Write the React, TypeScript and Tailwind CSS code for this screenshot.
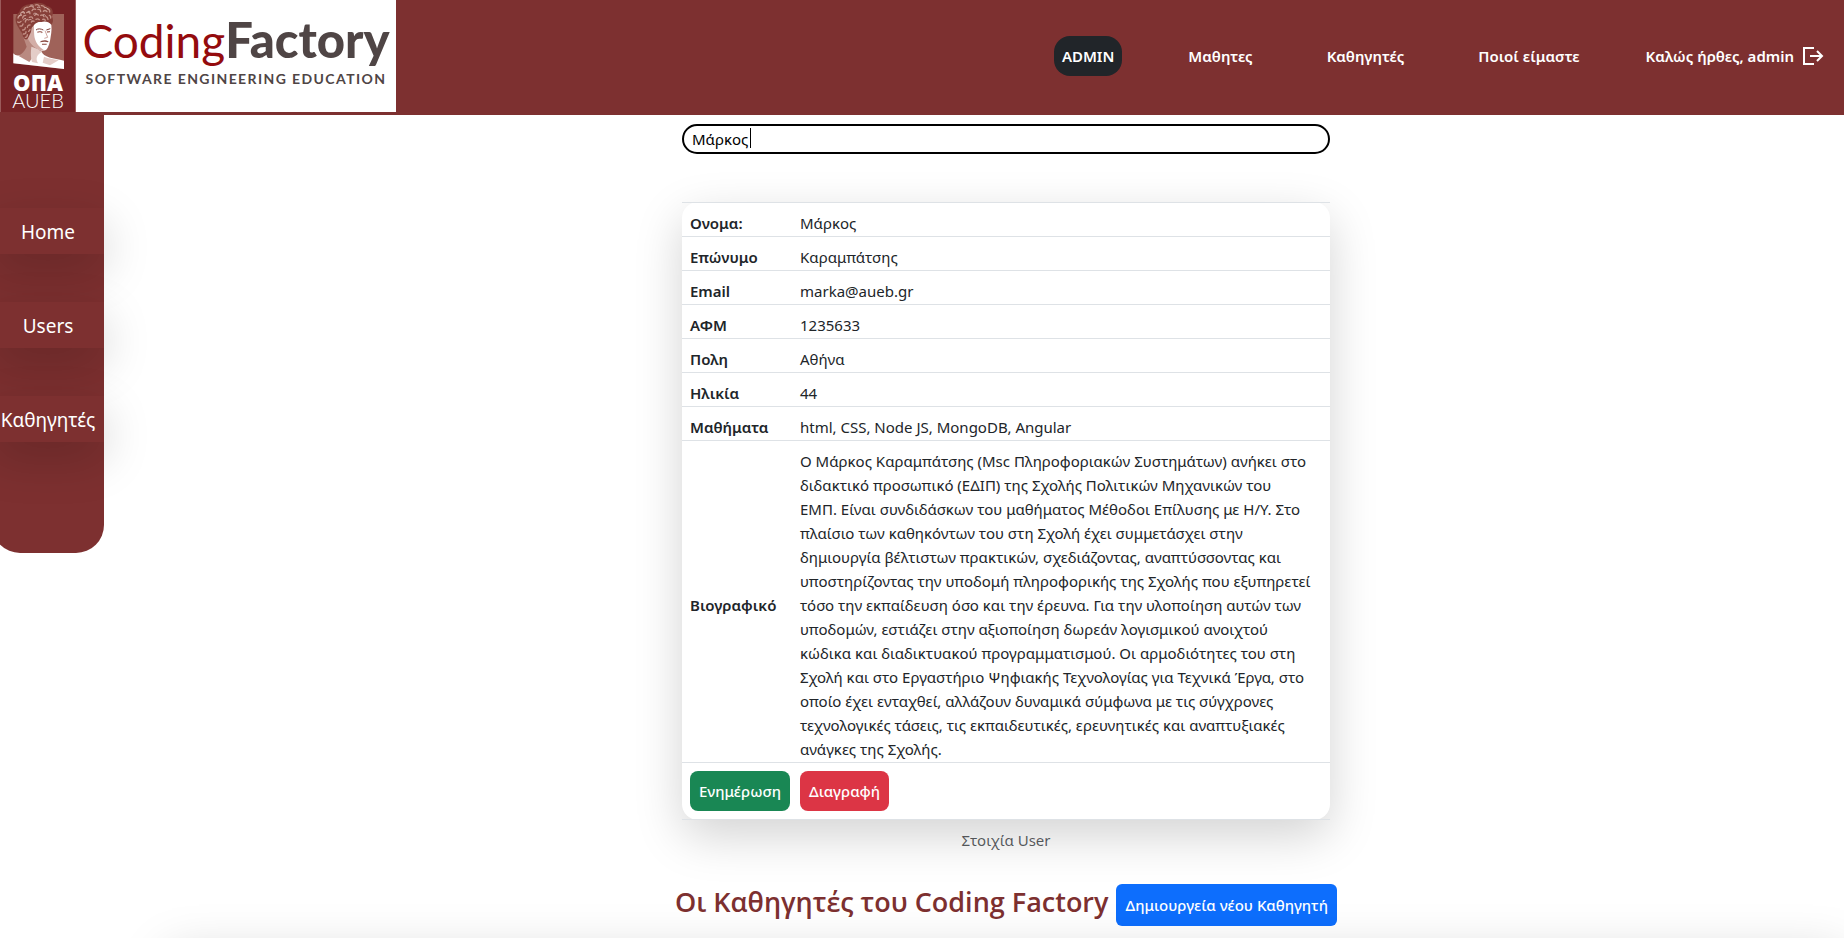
import { useState } from "react";

const navLinks = ["Μαθητες", "Καθηγητές", "Ποιοί είμαστε"];
const sideLinks = ["Home", "Users", "Καθηγητές"];

const details: [string, string][] = [
  ["Ονομα:", "Μάρκος"],
  ["Επώνυμο", "Καραμπάτσης"],
  ["Email", "marka@aueb.gr"],
  ["ΑΦΜ", "1235633"],
  ["Πολη", "Αθήνα"],
  ["Ηλικία", "44"],
  ["Μαθήματα", "html, CSS, Node JS, MongoDB, Angular"],
  [
    "Βιογραφικό",
    `Ο Μάρκος Καραμπάτσης (Msc Πληροφοριακών Συστημάτων) ανήκει στο
διδακτικό προσωπικό (ΕΔΙΠ) της Σχολής Πολιτικών Μηχανικών του
ΕΜΠ. Είναι συνδιδάσκων του μαθήματος Μέθοδοι Επίλυσης με Η/Υ. Στο
πλαίσιο των καθηκόντων του στη Σχολή έχει συμμετάσχει στην
δημιουργία βέλτιστων πρακτικών, σχεδιάζοντας, αναπτύσσοντας και
υποστηρίζοντας την υποδομή πληροφορικής της Σχολής που εξυπηρετεί
τόσο την εκπαίδευση όσο και την έρευνα. Για την υλοποίηση αυτών των
υποδομών, εστιάζει στην αξιοποίηση δωρεάν λογισμικού ανοιχτού
κώδικα και διαδικτυακού προγραμματισμού. Οι αρμοδιότητες του στη
Σχολή και στο Εργαστήριο Ψηφιακής Τεχνολογίας για Τεχνικά Έργα, στο
οποίο έχει ενταχθεί, αλλάζουν δυναμικά σύμφωνα με τις σύγχρονες
τεχνολογικές τάσεις, τις εκπαιδευτικές, ερευνητικές και αναπτυξιακές
ανάγκες της Σχολής.`,
  ],
];

function Bust() {
  return (
    <svg viewBox="0 0 228 210" className="h-[70px] w-[76px]" aria-hidden="true">
      <path d="M40 42H192V207L40 190Z" fill="#9f6259" />
      <path d="M40 160C52 174 70 164 84 146L124 154C130 172 160 176 192 182V207L40 190Z" fill="#fff" />
      <path d="M66 100L80 140C74 154 64 162 56 168L88 186C98 172 102 164 108 152L92 110Z" fill="#b98a81" />
      <path d="M94 140C92 160 92 172 96 186L114 190C106 176 110 164 126 156L112 146Z" fill="#e4cdc8" />
      <path d="M132 170C146 176 160 176 176 181L150 196L128 188Z" fill="#e4cdc8" />
      <path d="M80 62C96 52 132 54 152 66C156 80 155 96 152 110C150 126 146 142 138 150C130 154 120 152 112 146C98 136 82 116 78 96Z" fill="#fff" />
      <path d="M80 62L100 68C104 86 100 104 106 120C112 136 124 146 134 151C124 154 112 148 102 140C86 126 76 104 76 84Z" fill="#d3aea7" />
      <path d="M108 90C114 85 122 86 130 90M139 90L151 86" stroke="#7d3f3a" strokeWidth="3" fill="none" />
      <path d="M112 97C118 94 124 95 127 98M141 96L150 95" stroke="#a8746c" strokeWidth="4" fill="none" />
      <path d="M135 92L143 112L133 115" stroke="#cfa69f" strokeWidth="3" fill="none" />
      <path d="M119 127C124 119 138 119 146 124L144 127L134 125Z" fill="#8e4d45" />
      <path d="M126 133L140 133" stroke="#a8746c" strokeWidth="4" />
      <path d="M54 80C42 62 46 44 58 36C62 18 82 10 96 13C112 4 134 10 140 18C158 20 162 38 156 50C162 60 158 70 154 74C146 66 136 62 124 66C110 64 104 72 98 80C92 84 96 94 90 102C86 110 84 120 76 118C66 112 68 98 62 94Z" fill="#874039" />
      <g fill="none" stroke="#c39187" strokeWidth="4" strokeLinecap="round">
        <path d="M54 54q2-9 10-8M62 40q6-7 11 0M72 28q4-8 12-6M88 20q8-4 12 2M106 15q8-3 12 3M124 17q8-1 10 6M142 26q8 2 7 10" />
        <path d="M53 66q5 4 10-2M68 54q1-8 9-8M80 38q7-4 10 3M96 32q3-7 11-4M114 28q8-1 8 7M130 34q5-5 11 1M148 46q5 1 4 8" />
        <path d="M60 78q7 2 9-6M76 66q0-8 8-8M88 52q7-4 10 3M104 46q4-6 11-1M122 46q7-3 10 4M138 50q5 1 6 8M108 58q6-3 10 1M94 66q4-5 8-2M128 58q6-1 8 3" />
        <path d="M68 90q7 1 8-7M82 82q1-8 8-7M70 102q8 1 8-7M76 112q6-1 6-8M86 94q4-2 4-6" />
      </g>
      <g fill="none" stroke="#e6cfc8" strokeWidth="2" strokeLinecap="round">
        <path d="M66 36q5-4 8 1M92 15q6-2 9 3M112 22q5-3 9 1M136 22q5 0 7 5M57 48q2-5 7-5M84 34q5-3 7 2M100 42q4-5 9-2M70 60q2-6 7-5M130 44q4-2 7 3M86 60q4-4 8-1" />
      </g>
    </svg>
  );
}

function Logo() {
  return (
    <a href="#home" className="flex h-28 shrink-0 bg-white">
      <span className="flex w-[76px] flex-col items-center border-x border-[#9a5a5a] bg-[#752225] text-white">
        <Bust />
        <span className="mt-0.5 font-['Open_Sans',sans-serif] text-[22px] leading-5 font-extrabold">ΟΠΑ</span>
        <span className="font-[Lato,sans-serif] text-[20px] leading-4 font-light">AUEB</span>
      </span>
      <span className="flex w-80 flex-col items-center pt-3 font-[Lato,sans-serif]">
        <span className="text-[46px] leading-[54px] text-[#940b0e]">
          Coding<span className="text-[49px] font-black text-[#4f4545]">Factory</span>
        </span>
        <span className="text-[14px] leading-[22px] font-bold tracking-widest whitespace-nowrap text-[#4f4545]">
          SOFTWARE ENGINEERING EDUCATION
        </span>
      </span>
    </a>
  );
}

function LogoutIcon() {
  return (
    <svg viewBox="0 0 22 20" className="h-5 w-[22px]" fill="none" stroke="currentColor" strokeWidth="2" aria-hidden="true">
      <path d="M12 2H2V18H12M8 10H20M15 5L20 10L15 15" />
    </svg>
  );
}

export default function App() {
  const [query, setQuery] = useState("Μάρκος");
  const [editing, setEditing] = useState(false);
  return (
    <div className="flex h-screen flex-col overflow-hidden bg-white font-['Noto_Sans','Open_Sans',sans-serif] text-[15px] leading-6 text-[#212529]">
      <header className="flex h-[115px] shrink-0 items-start justify-between bg-[#7d3030]">
        <Logo />
        <nav className="flex h-28 items-center gap-[58px] pr-3 font-semibold whitespace-nowrap text-white">
          <a href="#admin" className="rounded-2xl bg-[#212529] p-2">
            ADMIN
          </a>
          {navLinks.map((label) => (
            <a key={label} href="#nav" className="p-2">
              {label}
            </a>
          ))}
          <a href="#logout" className="-ml-2 flex items-center gap-2 p-2">
            Καλώς ήρθες, admin
            <LogoutIcon />
          </a>
        </nav>
      </header>

      <div className="flex items-start">
        <aside className="-ml-2 w-28 shrink-0 rounded-b-[28px] bg-[#7d3030] pt-[93px] pb-[111px]">
          <nav className="flex flex-col gap-12 text-center text-[19px] leading-7 text-white">
            {sideLinks.map((label) => (
              <a
                key={label}
                href="#side"
                className="bg-[#7d3030] pt-[10px] pb-2 whitespace-nowrap shadow-[0_16px_48px_rgba(0,0,0,0.175)]"
              >
                {label}
              </a>
            ))}
          </nav>
        </aside>

        <main className="flex min-w-0 grow flex-col pl-16">
          <div className="mx-auto w-full max-w-[648px] pt-[9px]">
            <div className="relative">
              <input
                type="text"
                aria-label="Αναζήτηση"
                value={query}
                onFocus={() => setEditing(true)}
                onChange={(e) => setQuery(e.target.value)}
                className="block h-[30px] w-full rounded-2xl border-2 border-black bg-white px-2 text-black outline-none"
              />
              {!editing && <span className="absolute top-1 left-[68px] h-5 w-px bg-black" />}
            </div>
            <table className="mt-12 w-full caption-bottom border-collapse rounded-2xl bg-white text-left shadow-[0_16px_48px_rgba(0,0,0,0.175)]">
              <caption className="pt-2 pb-6 text-center text-[#212529]/75">Στοιχία User</caption>
              <tbody>
                {details.map(([label, value]) => (
                  <tr key={label} className="border-y border-[#dee2e6]">
                    <th scope="row" className="w-[110px] pt-2 pb-px pl-2 font-semibold">
                      {label}
                    </th>
                    <td className="pt-2 pb-px pl-2 whitespace-pre-line">{value}</td>
                  </tr>
                ))}
                <tr className="border-b border-[#dee2e6]">
                  <td className="py-2 pl-2">
                    <button type="button" className="rounded-lg bg-[#198754] px-[9px] py-2 font-medium text-white">
                      Ενημέρωση
                    </button>
                  </td>
                  <td className="py-2 pl-2">
                    <button type="button" className="rounded-lg bg-[#dc3545] px-[9px] py-2 font-medium text-white">
                      Διαγραφή
                    </button>
                  </td>
                </tr>
              </tbody>
            </table>
          </div>

          <div className="flex items-start justify-center gap-2 pt-2 pb-3">
            <h1 className="font-['Open_Sans','Noto_Sans',sans-serif] text-[27px] leading-9 font-semibold text-[#7d3030]">
              Οι Καθηγητές του Coding Factory
            </h1>
            <button type="button" className="h-[42px] rounded-md bg-[#0d6efd] px-[9px] font-medium text-white">
              Δημιουργεία νέου Καθηγητή
            </button>
          </div>
          <section className="h-96 shadow-[0_16px_48px_rgba(0,0,0,0.175)]" />
        </main>
      </div>
    </div>
  );
}
